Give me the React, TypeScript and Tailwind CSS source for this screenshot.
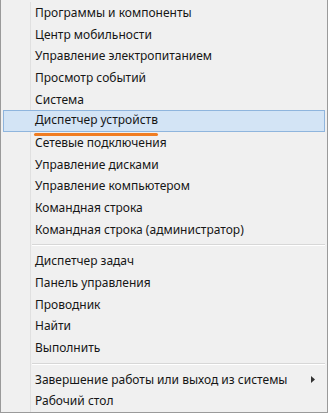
import React from "react";

type Item = { label: string; active?: boolean; sub?: boolean } | "sep";

const items: Item[] = [
  { label: "Программы и компоненты" },
  { label: "Центр мобильности" },
  { label: "Управление электропитанием" },
  { label: "Просмотр событий" },
  { label: "Система" },
  { label: "Диспетчер устройств", active: true },
  { label: "Сетевые подключения" },
  { label: "Управление дисками" },
  { label: "Управление компьютером" },
  { label: "Командная строка" },
  { label: "Командная строка (администратор)" },
  "sep",
  { label: "Диспетчер задач" },
  { label: "Панель управления" },
  { label: "Проводник" },
  { label: "Найти" },
  { label: "Выполнить" },
  "sep",
  { label: "Завершение работы или выход из системы", sub: true },
  { label: "Рабочий стол" },
];

export default function App() {
  return (
    <div className="w-[329px] h-[414px] bg-white">
      <div
        className="w-[328px] h-[413px] bg-[#f0f0f0] border-l border-r border-b border-[#9a9a9a] pt-[2px] flex flex-col text-[12px] text-[#161616]"
        style={{ fontFamily: '"Noto Sans", "Open Sans", sans-serif' }}
      >
        {items.map((it, i) =>
          it === "sep" ? (
            <div key={i} className="h-[10px] flex">
              <div className="w-[30px] border-r border-[#e0e0e0] shrink-0" />
              <div className="flex-1 flex flex-col justify-center pl-[1px] pr-[2px]">
                <div className="h-px bg-[#d7d7d7]" />
                <div className="h-px bg-white" />
              </div>
            </div>
          ) : it.active ? (
            <div key={i} className="h-[21.7px] flex px-[2px]">
              <div className="flex-1 flex items-center bg-[#d3e4f5] border border-[#8fb5dd] pl-[31px] relative">
                <span className="leading-none relative top-[-1px]">{it.label}</span>
                <div className="absolute left-[30px] top-[22px] w-[124px] h-[3px] rounded-full bg-[#f07d22]" />
              </div>
            </div>
          ) : (
            <div key={i} className="h-[21.7px] flex">
              <div className="w-[30px] border-r border-[#e0e0e0] shrink-0" />
              <div className="flex-1 flex items-center pl-[4px] pr-[12px]">
                <span className="flex-1 leading-none">{it.label}</span>
                {it.sub && (
                  <svg width="4" height="7" viewBox="0 0 4 7">
                    <path d="M0 0 L4 3.5 L0 7 Z" fill="#333" />
                  </svg>
                )}
              </div>
            </div>
          )
        )}
      </div>
    </div>
  );
}
